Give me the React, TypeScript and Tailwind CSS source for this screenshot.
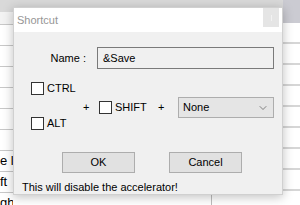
import { ChevronDown } from "lucide-react";

function Check({ label }: { label: string }) {
  return (
    <label className="flex h-[13px] items-center gap-[3px] leading-[13px]">
      <span className="block h-[13px] w-[13px] shrink-0 border border-[#333] bg-white" />
      <span>{label}</span>
    </label>
  );
}

function WinButton({ children }: { children: string }) {
  return (
    <button className="flex h-[21px] w-[73px] items-center justify-center border border-[#adadad] bg-[#e1e1e1] text-black">
      {children}
    </button>
  );
}

const leftRows = ["", "", "", "", "", "", "e l", "ft", "ght"];

export default function App() {
  return (
    <div
      className="relative h-[205px] w-[300px] overflow-hidden bg-white text-[11px] text-black"
      style={{ fontFamily: '"Liberation Sans", Arial, sans-serif' }}
    >
      {/* app behind the dialog */}
      <div className="flex">
        <div className="w-[13px]">
          <div className="h-[12px] bg-[#d9d9d9]" />
          <div className="h-[13px] border-b border-[#c8c8c8] bg-[#f3f3f3]" />
          {leftRows.map((t, i) => (
            <div
              key={i}
              className="h-[21px] overflow-hidden whitespace-pre border-b border-[#c8c8c8] text-[13px] leading-[20px]"
            >
              {t}
            </div>
          ))}
        </div>
        <div className="relative flex-1">
          <div className="h-[8px] bg-[#d9d9d9]" />
          <div className="ml-[198px] mt-[187px] h-[20px] w-px bg-[#bdbdbd]" />
        </div>
        <div className="w-[17px]">
          <div className="h-[23px] bg-[#cbcbd2]" />
          {leftRows.map((_, i) => (
            <div key={i} className="h-[21px] border-b-2 border-[#d6d6d6]" />
          ))}
        </div>
      </div>

      {/* dialog */}
      <div className="absolute left-[13px] top-[7px] flex h-[188px] w-[270px] flex-col border border-[#d0d0d0] bg-[#f0f0f0] shadow-[0_2px_10px_rgba(0,0,0,0.25)]">
        <div className="flex h-[24px] items-center justify-between bg-white pl-[3px] pr-[3px]">
          <span className="text-[#969696]">Shortcut</span>
          <span className="flex h-[19px] w-[16px] items-center justify-center self-start bg-[#e5e5e5]">
            <span className="block h-[6px] w-px bg-[#f2f2f2]" />
          </span>
        </div>

        <div className="mt-[15px] flex items-center">
          <span className="w-[72px] text-right">Name :</span>
          <div className="ml-[11px] flex h-[22px] w-[177px] items-center border border-[#7a7a7a] pl-[5px]">
            &amp;Save
          </div>
        </div>

        <div className="mt-[13px] flex items-center pl-[17px]">
          <div className="flex w-[45px] flex-col gap-[22px]">
            <Check label="CTRL" />
            <Check label="ALT" />
          </div>
          <div className="mt-[3px] flex items-center">
            <span className="ml-[7px] w-[7px]">+</span>
            <div className="ml-[9px] w-[49px]">
              <Check label="SHIFT" />
            </div>
            <span className="ml-[10px] w-[7px]">+</span>
            <div className="ml-[13px] flex h-[21px] w-[96px] items-center justify-between border border-[#adadad] bg-[#e5e5e5] pl-[4px] pr-[4px]">
              <span>None</span>
              <ChevronDown size={12} strokeWidth={1.25} className="text-[#444]" />
            </div>
          </div>
        </div>

        <div className="mt-[22px] flex gap-[34px] pl-[48px]">
          <WinButton>OK</WinButton>
          <WinButton>Cancel</WinButton>
        </div>

        <div className="mt-[7px] pl-[8px] leading-[14px]">This will disable the accelerator!</div>
      </div>
    </div>
  );
}
